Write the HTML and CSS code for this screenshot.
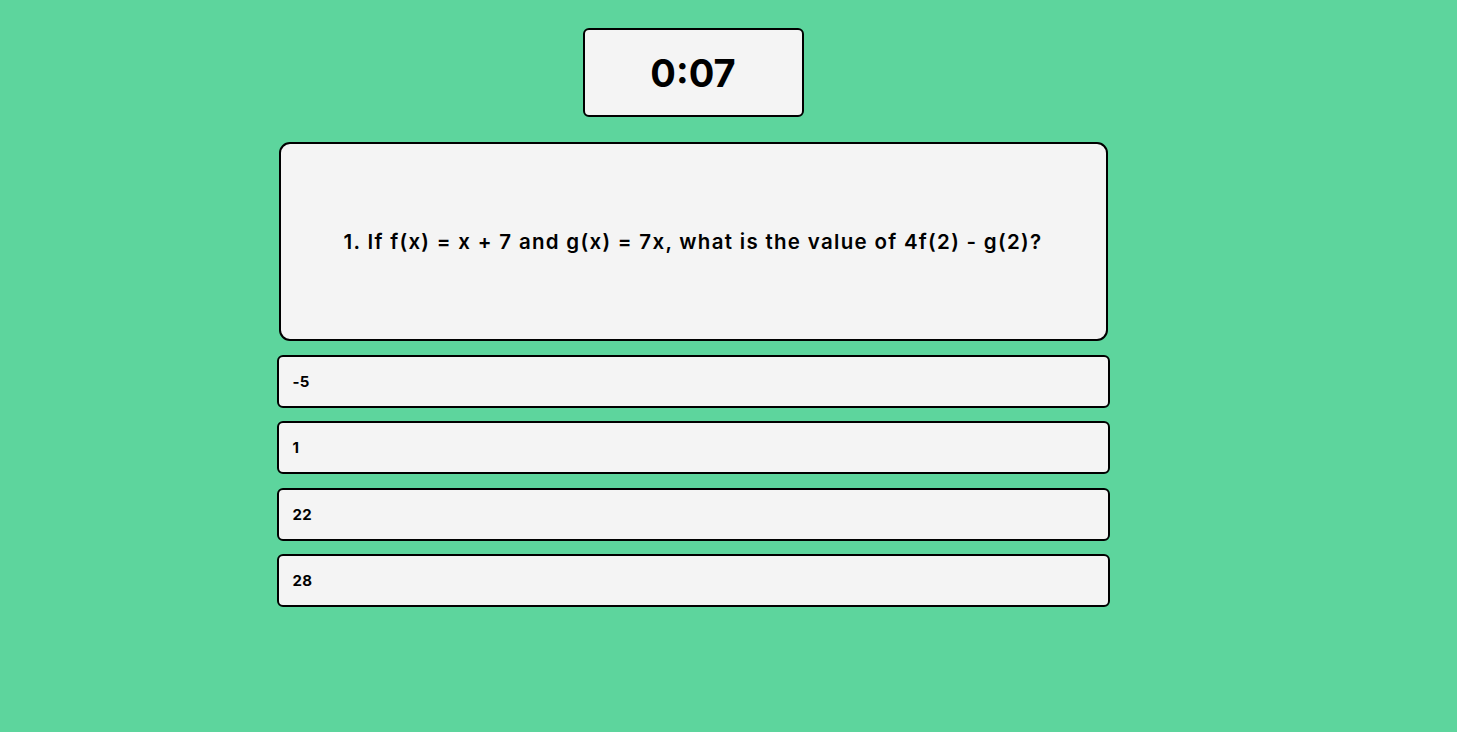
FILE: index.html
```html
<!DOCTYPE html>
<html lang="en">
<head>
<meta charset="utf-8">
<title>Quiz</title>
<link rel="stylesheet" href="styles.css">
</head>
<body>
  <main class="quiz">
    <div class="timer">0:07</div>
    <div class="question">1. If f(x) = x + 7 and g(x) = 7x, what is the value of 4f(2) - g(2)?</div>
    <div class="options">
      <button class="option">-5</button>
      <button class="option">1</button>
      <button class="option">22</button>
      <button class="option">28</button>
    </div>
  </main>
</body>
</html>
```

FILE: styles.css
```css
html, body {
  margin: 0;
  padding: 0;
  background: #5dd59d;
  font-family: Inter, "Noto Sans", sans-serif;
  color: #000;
}

.quiz {
  width: 1386px;
  padding-top: 28px;
  display: flex;
  flex-direction: column;
  align-items: center;
}

.timer {
  box-sizing: border-box;
  width: 221px;
  height: 89px;
  background: #f4f4f4;
  border: 2px solid #000;
  border-radius: 6px;
  display: flex;
  align-items: center;
  justify-content: center;
  font-size: 38px;
  font-weight: 700;
  letter-spacing: 0;
}

.question {
  box-sizing: border-box;
  margin-top: 25px;
  width: 829px;
  height: 199px;
  background: #f4f4f4;
  border: 2px solid #000;
  border-radius: 11px;
  display: flex;
  align-items: center;
  justify-content: center;
  font-size: 20.5px;
  font-weight: 600;
  letter-spacing: 1.3px;
}

.options {
  margin-top: 14px;
  display: flex;
  flex-direction: column;
  gap: 13.33px;
}

.option {
  box-sizing: border-box;
  width: 833px;
  height: 53px;
  background: #f4f4f4;
  border: 2px solid #000;
  border-radius: 6px;
  padding: 0 0 0 14px;
  text-align: left;
  font-family: Inter, "Noto Sans", sans-serif;
  font-size: 15px;
  font-weight: 700;
  letter-spacing: 0.3px;
  color: #000;
}
```
